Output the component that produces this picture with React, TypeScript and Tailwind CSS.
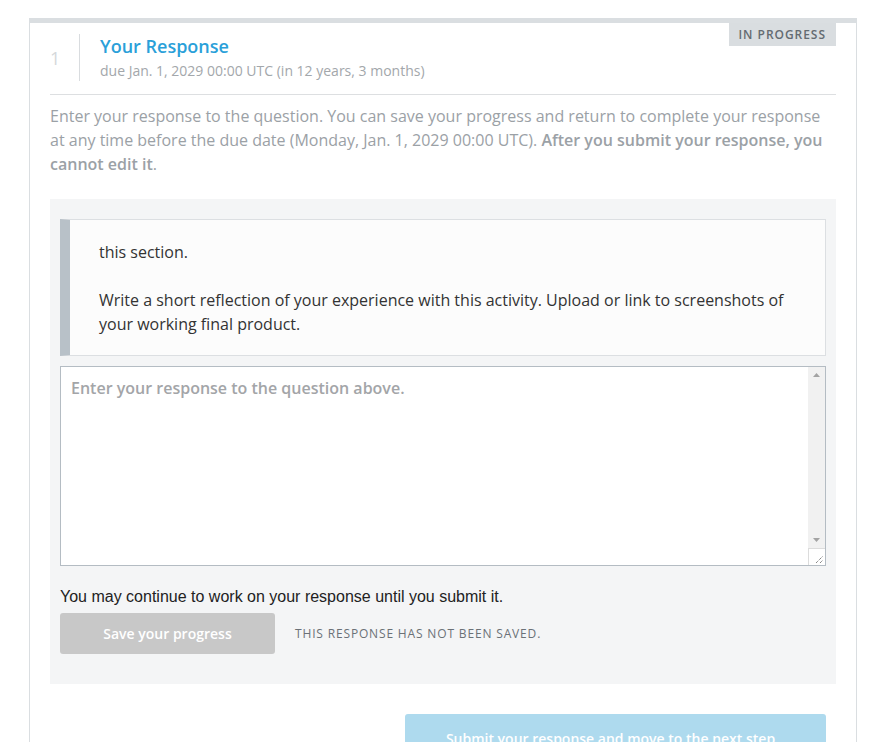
export default function App() {
  return (
    <div className="min-h-screen bg-white pt-[18px] pl-[29px] font-['Open_Sans',sans-serif]">
      <div className="relative w-[828px] border-x border-t-[5px] border-[#dadee1] px-5 pt-[11px] pb-10">
        {/* status badge */}
        <span className="absolute top-0 right-5 bg-[#d9dde0] px-[10px] py-[3px] text-[12px] leading-[17px] font-semibold tracking-[0.08em] text-[#646b71]">
          IN PROGRESS
        </span>

        {/* header */}
        <div className="flex border-b border-[#dddfe1] pb-[13px]">
          <div className="flex w-[30px] items-center border-r border-[#d9dcdf] pt-[2px] text-[18px] text-[#d5d8db]">1</div>
          <div className="pl-5">
            <h2 className="text-[18px] leading-6 font-semibold text-[#2aa0d9]">Your Response</h2>
            <p className="mt-[3px] text-[14px] leading-5 text-[#a3a7ab]">due Jan. 1, 2029 00:00 UTC (in 12 years, 3 months)</p>
          </div>
        </div>

        <p className="mt-[9px] text-[16px] leading-6 text-[#9ba1a6]">
          Enter your response to the question. You can save your progress and return to complete your response at any
          time before the due date (Monday, Jan. 1, 2029 00:00 UTC).{' '}
          <strong className="font-semibold">After you submit your response, you cannot edit it</strong>.
        </p>

        {/* response area */}
        <div className="mt-[23px] bg-[#f4f5f6] px-[10px] pt-5 pb-[30px]">
          <div className="border border-l-[10px] border-[#dcdfe2] border-l-[#b8c1c8] bg-[#fcfcfc] px-[29px] pt-5 pb-[19px] text-[16px] leading-6 text-[#333]">
            <p className="mb-6">this section.</p>
            <p>Write a short reflection of your experience with this activity. Upload or link to screenshots of your working final product.</p>
          </div>

          <div className="mt-[10px] flex h-[200px] border border-[#b4bcc3] bg-white">
            <textarea
              className="block h-full flex-1 resize-none bg-white px-[10px] py-[9px] text-[16px] leading-6 font-semibold text-[#333] placeholder:text-[#a3a5a8] focus:outline-none"
              placeholder="Enter your response to the question above."
            />
            {/* scrollbar */}
            <div className="flex w-[17px] flex-col">
              <div className="flex flex-1 flex-col items-center justify-between bg-[#f1f1f1] py-[6px]">
                <svg width="7" height="4" viewBox="0 0 7 4"><path d="M3.5 0L7 4H0z" fill="#a3a3a3" /></svg>
                <svg width="7" height="4" viewBox="0 0 7 4"><path d="M0 0h7L3.5 4z" fill="#a3a3a3" /></svg>
              </div>
              <div className="flex h-[17px] items-end justify-end border-t border-l border-[#dcdcdc] bg-white p-[2px]">
                <svg width="8" height="8" viewBox="0 0 8 8">
                  <path d="M1 8L8 1M5 8L8 5" stroke="#555" strokeWidth="1" strokeDasharray="1 1" />
                </svg>
              </div>
            </div>
          </div>

          <p className="mt-[22px] font-['Liberation_Sans',Arial,sans-serif] text-[16px] leading-[18px] text-[#222]">
            You may continue to work on your response until you submit it.
          </p>
          <div className="mt-[7px] flex items-center gap-5">
            <button className="h-[41px] w-[215px] rounded-[3px] bg-[#c8c8c8] text-[14px] font-semibold text-white">Save your progress</button>
            <span className="text-[12px] tracking-[0.07em] text-[#6b7177]">THIS RESPONSE HAS NOT BEEN SAVED.</span>
          </div>
        </div>

        <div className="mt-[30px] flex justify-end pr-[10px]">
          <button className="h-[48px] w-[421px] rounded-[3px] bg-[#aedaee] pr-[10px] text-[14px] font-semibold text-white">
            Submit your response and move to the next step
          </button>
        </div>
      </div>
    </div>
  )
}
